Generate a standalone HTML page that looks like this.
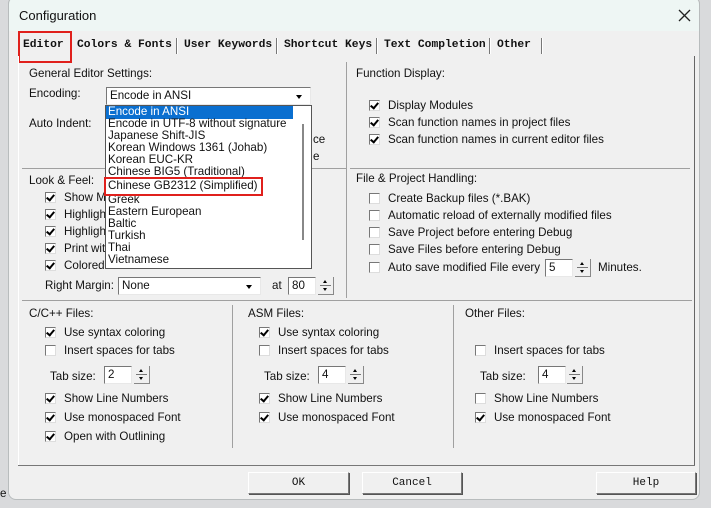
<!DOCTYPE html>
<html><head><meta charset="utf-8">
<style>
*{box-sizing:border-box;margin:0;padding:0}
body{width:711px;height:508px;overflow:hidden;background:#d9dadc;font-family:"Liberation Sans",sans-serif;font-size:11.6px;color:#111;position:relative}
.a{position:absolute;white-space:nowrap;line-height:13px}
.dlg{position:absolute;left:8px;top:-4px;width:692px;height:504px;background:#f0f0f0;border:1px solid #b8bcbd;border-radius:8px;overflow:hidden}
.tab{position:absolute;top:39px;font-family:"Liberation Mono",monospace;font-weight:bold;font-size:11.3px;line-height:13px}
.sep{position:absolute;top:38px;width:2px;height:16px;border-left:1px solid #777;border-right:1px solid #fff}
.hl{position:absolute;background:#a0a0a0;height:1px}
.vl{position:absolute;background:#a0a0a0;width:1px}
.cb{position:absolute;width:11px;height:11px;background:#fff;border-top:1px solid #777;border-left:1px solid #777;border-right:1px solid #ddd;border-bottom:1px solid #ddd}
.cb.k::after{content:"";position:absolute;left:2px;top:0px;width:3px;height:6px;border-right:2px solid #000;border-bottom:2px solid #000;transform:rotate(40deg)}
.inp{position:absolute;background:#fff;border-top:1px solid #777;border-left:1px solid #777;border-right:1px solid #e8e8e8;border-bottom:1px solid #e8e8e8;height:18px;padding:1px 3px;line-height:14px}
.spin{position:absolute;width:16px;height:18px;border-right:1px solid #888;border-bottom:1px solid #888}
.spin::before{content:"";position:absolute;left:2px;top:8px;width:11px;height:1px;background:#777}
.spin i{position:absolute;left:5px;width:0;height:0;border-left:2px solid transparent;border-right:2px solid transparent}
.spin i.u{top:3px;border-bottom:3px solid #000}
.spin i.d{top:11px;border-top:3px solid #000}
.arr{position:absolute;width:0;height:0;border-left:3px solid transparent;border-right:3px solid transparent;border-top:4px solid #000}
.btn{position:absolute;top:472px;height:22px;background:#f0f0f0;border-top:1px solid #fff;border-left:1px solid #fff;border-right:1px solid #777;border-bottom:1px solid #777;box-shadow:1px 1px 0 #555;font-family:"Liberation Mono",monospace;font-size:11px;text-align:center;line-height:20px}
.li{position:absolute;left:108px;line-height:12px}
</style></head><body>
<div class="a" style="left:0;top:487px">e</div>
<div class="dlg"></div>
<div class="a" style="left:8px;top:-4px;width:692px;height:35px;background:#eef6f4;border-radius:8px 8px 0 0;border:1px solid #b8bcbd;border-bottom:none"></div>
<div class="a" style="left:19px;top:8px;font-size:13px;line-height:15px">Configuration</div>
<svg class="a" style="left:678px;top:9px" width="13" height="13" viewBox="0 0 13 13"><path d="M1 1L12 12M12 1L1 12" stroke="#222" stroke-width="1.3"/></svg>

<div class="tab" style="left:23px">Editor</div>
<div class="sep" style="left:70px"></div>
<div class="tab" style="left:77px">Colors &amp; Fonts</div>
<div class="sep" style="left:176px"></div>
<div class="tab" style="left:184px">User Keywords</div>
<div class="sep" style="left:276px"></div>
<div class="tab" style="left:284px">Shortcut Keys</div>
<div class="sep" style="left:376px"></div>
<div class="tab" style="left:384px">Text Completion</div>
<div class="sep" style="left:489px"></div>
<div class="tab" style="left:497px">Other</div>
<div class="sep" style="left:541px"></div>
<div class="a" style="left:18px;top:31px;width:54px;height:32px;border:2px solid #e0201c"></div>

<div class="vl" style="left:18px;top:56px;height:410px;background:#fff"></div>
<div class="vl" style="left:694px;top:56px;height:410px;background:#666"></div>
<div class="hl" style="left:18px;top:465px;width:677px;background:#777"></div>

<div class="hl" style="left:22px;top:168px;width:324px"></div>
<div class="vl" style="left:346px;top:62px;height:236px"></div>
<div class="hl" style="left:350px;top:168px;width:340px"></div>
<div class="hl" style="left:22px;top:300px;width:670px"></div>
<div class="vl" style="left:232px;top:305px;height:143px"></div>
<div class="vl" style="left:453px;top:305px;height:143px"></div>

<div class="a" style="left:29px;top:67px">General Editor Settings:</div>
<div class="a" style="left:29px;top:87px">Encoding:</div>
<div class="a" style="left:29px;top:117px">Auto Indent:</div>
<div class="a" style="left:313px;top:133px">ce</div>
<div class="a" style="left:313px;top:150px">e</div>
<div class="inp" style="left:106px;top:87px;width:205px">Encode in ANSI</div>
<div class="arr" style="left:296px;top:95px"></div>

<div class="a" style="left:29px;top:174px">Look &amp; Feel:</div>
<div class="cb k" style="left:45px;top:192px"></div><div class="a" style="left:64px;top:191px">Show M</div>
<div class="cb k" style="left:45px;top:209px"></div><div class="a" style="left:64px;top:208px">Highligh</div>
<div class="cb k" style="left:45px;top:226px"></div><div class="a" style="left:64px;top:225px">Highligh</div>
<div class="cb k" style="left:45px;top:243px"></div><div class="a" style="left:64px;top:242px">Print wit</div>
<div class="cb k" style="left:45px;top:260px"></div><div class="a" style="left:64px;top:259px">Colored</div>
<div class="a" style="left:45px;top:279px">Right Margin:</div>
<div class="inp" style="left:118px;top:277px;width:143px">None</div>
<div class="arr" style="left:246px;top:285px"></div>
<div class="a" style="left:272px;top:279px">at</div>
<div class="inp" style="left:288px;top:277px;width:28px">80</div>
<div class="spin" style="left:318px;top:277px"><i class="u"></i><i class="d"></i></div>

<div class="a" style="left:105px;top:105px;width:207px;height:164px;background:#fff;border:1px solid #555"></div>
<div class="a" style="left:106px;top:106px;width:187px;height:13px;background:#0a6fd0"></div>
<div class="vl" style="left:302px;top:124px;height:116px;background:#888;width:2px"></div>
<div class="li" style="top:106px;color:#fff">Encode in ANSI</div>
<div class="li" style="top:118px">Encode in UTF-8 without signature</div>
<div class="li" style="top:130px">Japanese Shift-JIS</div>
<div class="li" style="top:142px">Korean Windows 1361 (Johab)</div>
<div class="li" style="top:154px">Korean EUC-KR</div>
<div class="li" style="top:166px">Chinese BIG5 (Traditional)</div>
<div class="li" style="top:180px">Chinese GB2312 (Simplified)</div>
<div class="li" style="top:194px">Greek</div>
<div class="li" style="top:206px">Eastern European</div>
<div class="li" style="top:218px">Baltic</div>
<div class="li" style="top:230px">Turkish</div>
<div class="li" style="top:242px">Thai</div>
<div class="li" style="top:254px">Vietnamese</div>
<div class="a" style="left:104px;top:177px;width:159px;height:19px;border:2px solid #e0201c"></div>

<div class="a" style="left:356px;top:67px">Function Display:</div>
<div class="cb k" style="left:369px;top:100px"></div><div class="a" style="left:388px;top:99px">Display Modules</div>
<div class="cb k" style="left:369px;top:117px"></div><div class="a" style="left:388px;top:116px">Scan function names in project files</div>
<div class="cb k" style="left:369px;top:134px"></div><div class="a" style="left:388px;top:133px">Scan function names in current editor files</div>

<div class="a" style="left:356px;top:172px">File &amp; Project Handling:</div>
<div class="cb" style="left:369px;top:193px"></div><div class="a" style="left:388px;top:192px">Create Backup files (*.BAK)</div>
<div class="cb" style="left:369px;top:210px"></div><div class="a" style="left:388px;top:209px">Automatic reload of externally modified files</div>
<div class="cb" style="left:369px;top:227px"></div><div class="a" style="left:388px;top:226px">Save Project before entering Debug</div>
<div class="cb" style="left:369px;top:244px"></div><div class="a" style="left:388px;top:243px">Save Files before entering Debug</div>
<div class="cb" style="left:369px;top:262px"></div><div class="a" style="left:388px;top:261px">Auto save modified File every</div>
<div class="inp" style="left:545px;top:259px;width:28px">5</div>
<div class="spin" style="left:575px;top:259px"><i class="u"></i><i class="d"></i></div>
<div class="a" style="left:598px;top:261px">Minutes.</div>

<div class="a" style="left:29px;top:307px">C/C++ Files:</div>
<div class="cb k" style="left:45px;top:327px"></div><div class="a" style="left:64px;top:326px">Use syntax coloring</div>
<div class="cb" style="left:45px;top:345px"></div><div class="a" style="left:64px;top:344px">Insert spaces for tabs</div>
<div class="a" style="left:50px;top:370px">Tab size:</div>
<div class="inp" style="left:104px;top:366px;width:28px">2</div>
<div class="spin" style="left:134px;top:366px"><i class="u"></i><i class="d"></i></div>
<div class="cb k" style="left:45px;top:393px"></div><div class="a" style="left:64px;top:392px">Show Line Numbers</div>
<div class="cb k" style="left:45px;top:412px"></div><div class="a" style="left:64px;top:411px">Use monospaced Font</div>
<div class="cb k" style="left:45px;top:431px"></div><div class="a" style="left:64px;top:430px">Open with Outlining</div>

<div class="a" style="left:248px;top:307px">ASM Files:</div>
<div class="cb k" style="left:259px;top:327px"></div><div class="a" style="left:278px;top:326px">Use syntax coloring</div>
<div class="cb" style="left:259px;top:345px"></div><div class="a" style="left:278px;top:344px">Insert spaces for tabs</div>
<div class="a" style="left:264px;top:370px">Tab size:</div>
<div class="inp" style="left:318px;top:366px;width:28px">4</div>
<div class="spin" style="left:348px;top:366px"><i class="u"></i><i class="d"></i></div>
<div class="cb k" style="left:259px;top:393px"></div><div class="a" style="left:278px;top:392px">Show Line Numbers</div>
<div class="cb k" style="left:259px;top:412px"></div><div class="a" style="left:278px;top:411px">Use monospaced Font</div>

<div class="a" style="left:465px;top:307px">Other Files:</div>
<div class="cb" style="left:475px;top:345px"></div><div class="a" style="left:494px;top:344px">Insert spaces for tabs</div>
<div class="a" style="left:480px;top:370px">Tab size:</div>
<div class="inp" style="left:538px;top:366px;width:28px">4</div>
<div class="spin" style="left:567px;top:366px"><i class="u"></i><i class="d"></i></div>
<div class="cb" style="left:475px;top:393px"></div><div class="a" style="left:494px;top:392px">Show Line Numbers</div>
<div class="cb k" style="left:475px;top:412px"></div><div class="a" style="left:494px;top:411px">Use monospaced Font</div>

<div class="btn" style="left:248px;width:101px">OK</div>
<div class="btn" style="left:362px;width:100px">Cancel</div>
<div class="btn" style="left:596px;width:100px">Help</div>
</body></html>
